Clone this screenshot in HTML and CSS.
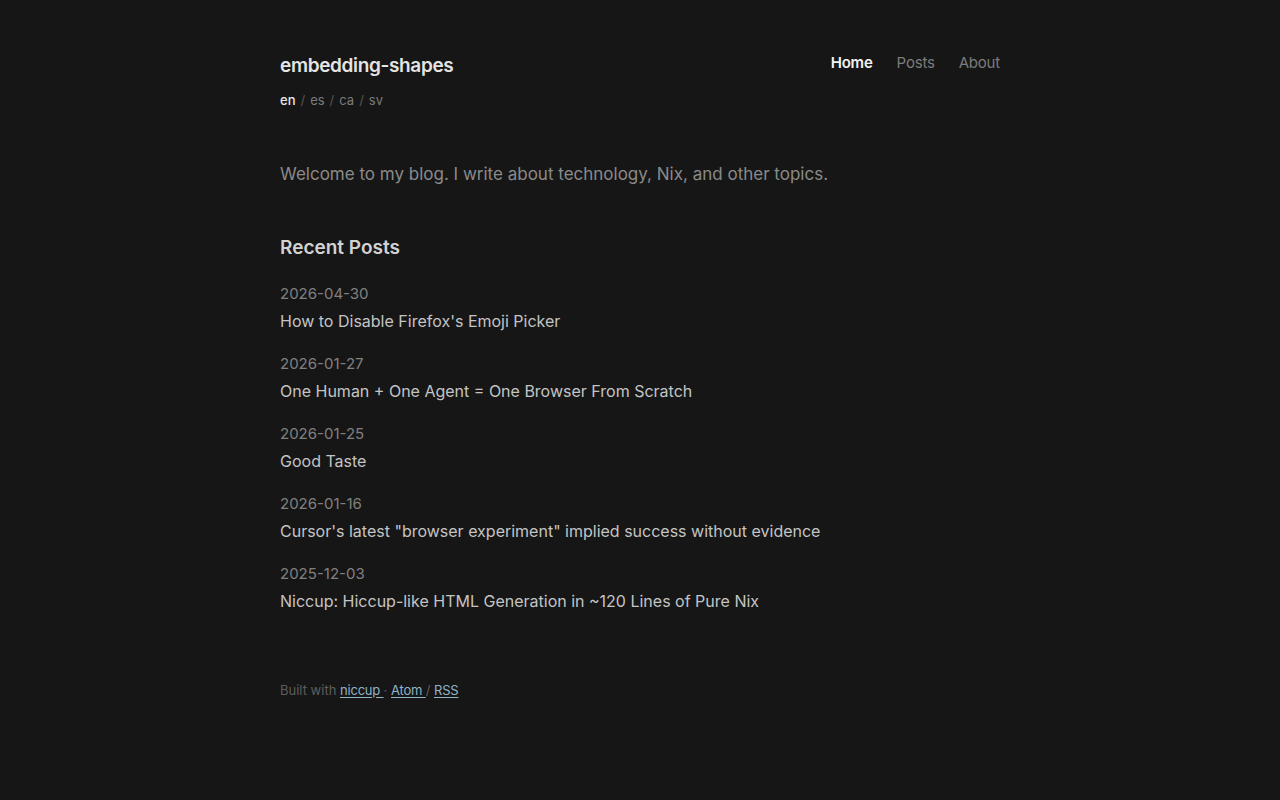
FILE: index.html
```html
<!DOCTYPE html>
<html lang="en">
<head>
    <meta charset="UTF-8">
    <meta name="viewport" content="width=device-width, initial-scale=1.0">
    <title>embedding-shapes</title>
    <link rel="stylesheet" href="styles.css">
</head>

<body>
    <div class="page">
        <header class="site-header">
            <div class="brand">
                <a class="site-title" href="#">embedding-shapes</a>
                <div class="langs">
                    <a class="active" href="#">en</a><span class="sep">/</span><a href="#">es</a><span class="sep">/</span><a href="#">ca</a><span class="sep">/</span><a href="#">sv</a>
                </div>
            </div>
            <nav class="nav">
                <a class="active" href="#">Home</a>
                <a href="#">Posts</a>
                <a href="#">About</a>
            </nav>
        </header>

        <main>
            <p class="intro">Welcome to my blog. I write about technology, Nix, and other topics.</p>

            <h2>Recent Posts</h2>
            <ul class="posts">
                <li>
                    <div class="date">2026-04-30</div>
                    <a href="#">How to Disable Firefox's Emoji Picker</a>
                </li>
                <li>
                    <div class="date">2026-01-27</div>
                    <a href="#">One Human + One Agent = One Browser From Scratch</a>
                </li>
                <li>
                    <div class="date">2026-01-25</div>
                    <a href="#">Good Taste</a>
                </li>
                <li>
                    <div class="date">2026-01-16</div>
                    <a href="#">Cursor's latest "browser experiment" implied success without evidence</a>
                </li>
                <li>
                    <div class="date">2025-12-03</div>
                    <a href="#">Niccup: Hiccup-like HTML Generation in ~120 Lines of Pure Nix</a>
                </li>
            </ul>
        </main>

        <footer class="site-footer">
            Built with <a href="#">niccup </a> · <a href="#">Atom </a>/ <a href="#">RSS</a>
        </footer>
    </div>
</body>
</html>
```

FILE: styles.css
```css
/* dark blog theme */
* {
   box-sizing: border-box;
}

body {
   margin: 0;
   background-color: #161616;
   color: #c8c8c8;
   font-family: Inter, "Noto Sans", sans-serif;
}

a {
   color: inherit;
   text-decoration: none;
}

.page {
   width: 720px;
   margin: 0 auto;
   padding: 53px 0 80px;
}

.site-header {
   display: flex;
   justify-content: space-between;
   align-items: flex-start;
}

.site-title {
   display: block;
   font-size: 19px;
   font-weight: 600;
   color: #e4e4e4;
   letter-spacing: -0.35px;
   line-height: 26px;
}

.langs {
   margin-top: 13px;
   font-size: 13px;
   color: #7a7a7a;
   line-height: 16px;
}

.langs a.active {
   color: #e8e8e8;
   font-weight: 500;
}

.langs .sep {
   margin: 0 5px;
   color: #555;
}

.nav {
   display: flex;
   gap: 24px;
   font-size: 15px;
   line-height: 20px;
   letter-spacing: -0.2px;
}

.nav a {
   color: #7c7c7c;
}

.nav a.active {
   color: #f2f2f2;
   font-weight: 600;
}

.intro {
   margin: 53px 0 0;
   font-size: 17px;
   line-height: 26px;
   color: #8a8a8a;
}

h2 {
   margin: 48px 0 0;
   font-size: 19px;
   font-weight: 600;
   line-height: 26px;
   color: #d2d2d2;
}

.posts {
   list-style: none;
   margin: 23px 0 0;
   padding: 0;
}

.posts li {
   margin-bottom: 21px;
}

.date {
   font-size: 15px;
   line-height: 20px;
   color: #808080;
}

.posts a {
   display: block;
   margin-top: 5px;
   font-size: 16px;
   line-height: 24px;
   color: #c4c4c4;
}

.site-footer {
   margin-top: 69px;
   font-size: 13px;
   color: #5e5e5e;
}

.site-footer a {
   color: #8fb4c6;
   letter-spacing: -0.2px;
   text-decoration: underline;
   text-underline-offset: 2px;
}
```
